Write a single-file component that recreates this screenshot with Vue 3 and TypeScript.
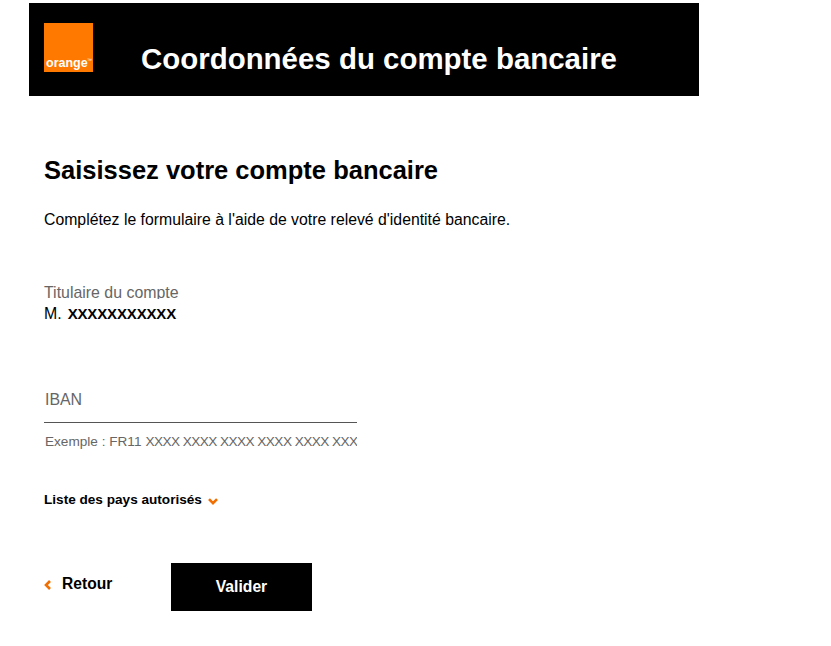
<script setup lang="ts">
const title = 'Coordonnées du compte bancaire'
const hint = ['XXXX', 'XXXX', 'XXXX', 'XXXX', 'XXXX', 'XXX'].join(' ')
</script>

<template>
  <div class="page">
    <header class="banner">
      <div class="logo"><span class="logo-text">orange</span><span class="tm">™</span></div>
      <h1 class="title">{{ title }}</h1>
    </header>
    <main class="content">
      <h2 class="heading">Saisissez votre compte bancaire</h2>
      <p class="intro">Complétez le formulaire à l'aide de votre relevé d'identité bancaire.</p>
      <div class="holder">
        <div class="holder-label">Titulaire du compte</div>
        <div class="holder-value"><span>M.</span><span class="holder-name">XXXXXXXXXXX</span></div>
      </div>
      <div class="iban">
        <div class="iban-field">IBAN</div>
        <div class="iban-hint"><span>Exemple : FR11</span><span class="hint-group">{{ hint }}</span></div>
      </div>
      <div class="countries">
        <span>Liste des pays autorisés</span>
        <svg class="chev-down" width="10" height="7" viewBox="0 0 10 7"><path d="M1 1.1 5 5.1l4-4" fill="none" stroke="#f16e00" stroke-width="2.6"/></svg>
      </div>
      <div class="actions">
        <a class="back">
          <svg class="chev-left" width="7" height="10" viewBox="0 0 7 10"><path d="M6 1 2 5l4 4" fill="none" stroke="#f16e00" stroke-width="2.6"/></svg>
          <span>Retour</span>
        </a>
        <button class="submit" type="button">Valider</button>
      </div>
    </main>
  </div>
</template>

<style scoped>
.page {
  width: 831px;
  height: 646px;
  overflow: hidden;
  background: #fff;
  color: #000;
  font-family: "Liberation Sans", Arial, sans-serif;
  padding: 3px 0 0 29px;
  box-sizing: border-box;
}
.banner {
  width: 670px;
  height: 93px;
  background: #000;
  display: flex;
  align-items: flex-start;
  padding: 20px 0 0 15px;
  box-sizing: border-box;
}
.logo {
  width: 49px;
  height: 49px;
  background: #ff7900;
  position: relative;
  flex: none;
}
.logo-text {
  position: absolute;
  left: 2px;
  bottom: 2px;
  color: #fff;
  font-size: 12.5px;
  font-weight: 700;
  line-height: 14px;
}
.tm {
  position: absolute;
  right: 1px;
  bottom: 9px;
  color: #fff;
  font-size: 5px;
  line-height: 5px;
}
.title {
  margin: 19px 0 0 48px;
  font-size: 29.45px;
  line-height: 34px;
  font-weight: 700;
  color: #fff;
  white-space: nowrap;
}
.content {
  padding: 60px 0 0 15px;
}
.heading {
  margin: 0;
  font-size: 25.5px;
  line-height: 28px;
  font-weight: 700;
}
.intro {
  margin: 27px 0 0;
  font-size: 15.8px;
  line-height: 18px;
}
.holder {
  margin-top: 55px;
}
.holder-label {
  height: 15px;
  overflow: hidden;
  color: #666;
  font-size: 15.9px;
  line-height: 17px;
}
.holder-value {
  display: flex;
  gap: 6px;
  font-size: 15.9px;
  line-height: 18px;
  margin-top: 6px;
}
.holder-name {
  font-weight: 700;
  letter-spacing: -0.15px;
  font-size: 15px;
}
.iban {
  margin-top: 68px;
  width: 313px;
}
.iban-field {
  height: 31px;
  border-bottom: 1px solid #555;
  color: #666;
  font-size: 15.9px;
  line-height: 18px;
  padding-left: 1px;
}
.iban-hint {
  display: flex;
  gap: 4px;
  margin-top: 10px;
  height: 17px;
  overflow: hidden;
  white-space: nowrap;
  color: #666;
  font-size: 13.6px;
  line-height: 17px;
  padding-left: 1px;
}
.hint-group {
  letter-spacing: -0.55px;
}
.countries {
  display: flex;
  align-items: center;
  gap: 6px;
  margin-top: 42px;
  font-size: 13.6px;
  line-height: 16px;
  font-weight: 700;
}
.chev-down {
  margin-top: 3px;
}
.actions {
  display: flex;
  align-items: flex-start;
  margin-top: 55px;
}
.back {
  display: flex;
  align-items: center;
  gap: 11px;
  width: 127px;
  margin-top: 12px;
  font-size: 15.6px;
  line-height: 18px;
  font-weight: 700;
}
.chev-left {
  margin-top: 2px;
}
.submit {
  width: 141px;
  height: 48px;
  border: 0;
  padding: 0;
  background: #000;
  color: #fff;
  font-family: inherit;
  font-size: 15.7px;
  font-weight: 700;
}
</style>
